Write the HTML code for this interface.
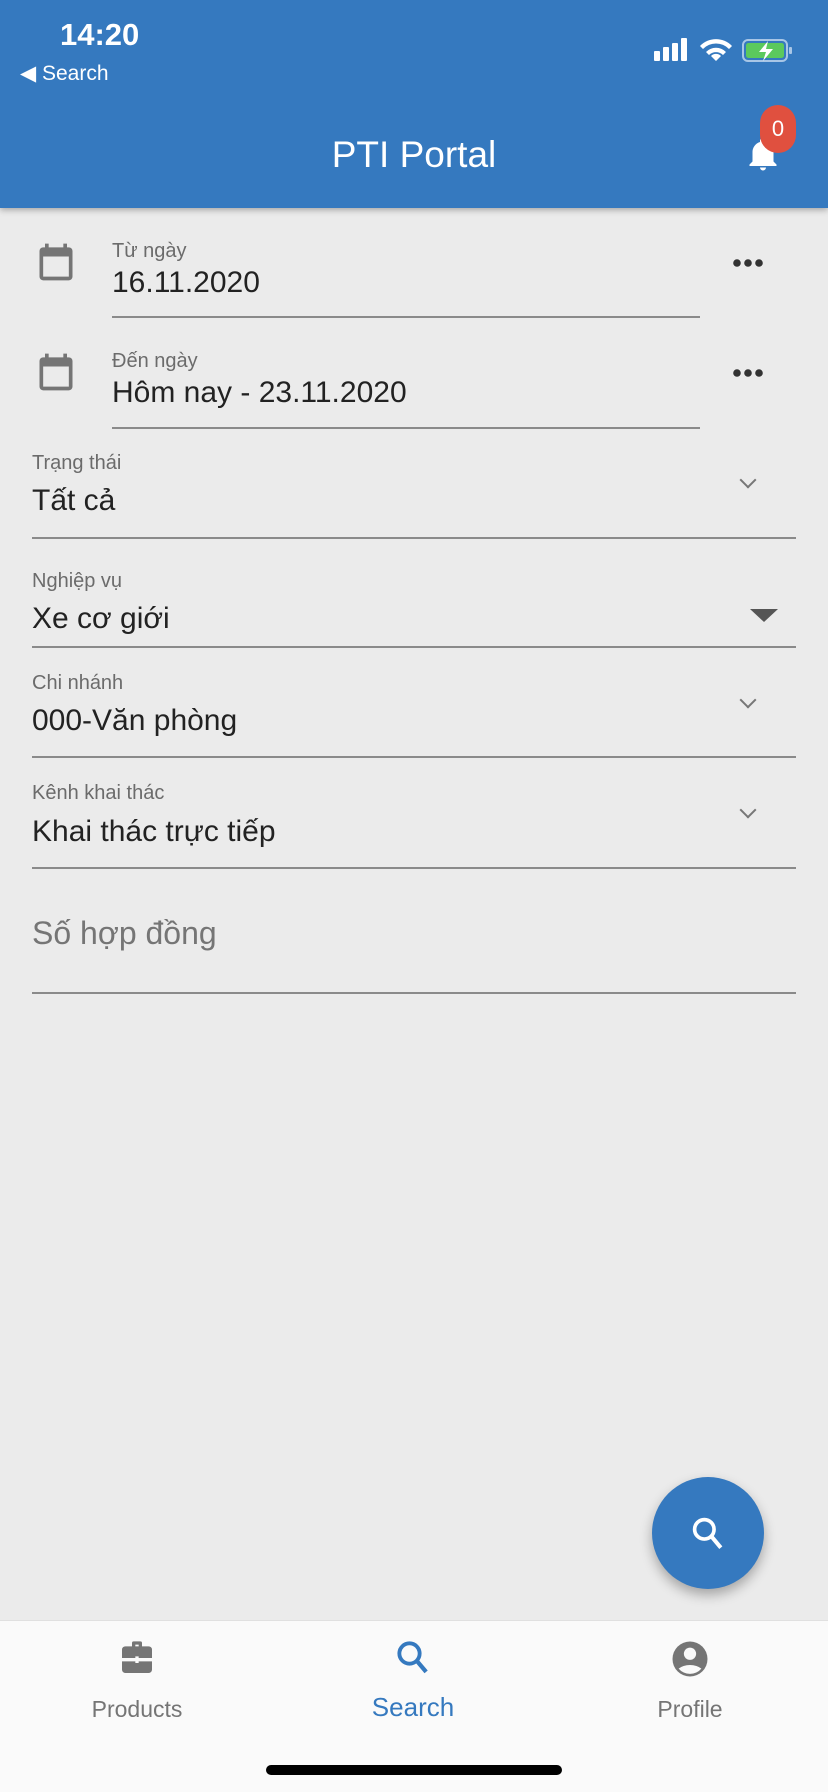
<!DOCTYPE html>
<html><head><meta charset="utf-8"><style>
*{margin:0;padding:0;box-sizing:border-box}
body{width:828px;height:1792px;background:#ebebeb;font-family:"Liberation Sans",sans-serif;position:relative;overflow:hidden;color:#222}
.a{position:absolute}
.hdr{left:0;top:0;width:828px;height:208px;background:#3579bf;box-shadow:0 2px 6px rgba(0,0,0,.3)}
.lbl{font-size:20px;color:#6b6b6b}
.val{font-size:30px;color:#222}
.line{height:1.5px;background:#8a8a8a}
.chev{width:12px;height:12px;border-right:2px solid #777;border-bottom:2px solid #777;transform:rotate(45deg)}
.nav{left:0;top:1620px;width:828px;height:172px;background:#fafafa;border-top:1px solid #e0e0e0}
.nl{font-size:23px;color:#757575;transform:translateX(-50%)}
</style></head><body>
<div class="a hdr"></div>
<div class="a" style="left:60px;top:17px;font-size:31px;color:#fff;font-weight:bold">14:20</div>
<div class="a" style="left:20px;top:61px;font-size:21px;color:#fff">◀ Search</div>
<svg class="a" style="left:652px;top:36px" width="150" height="28" viewBox="0 0 150 28">
<g fill="#fff"><rect x="2" y="15" width="6" height="10" rx="1"/><rect x="11" y="11" width="6" height="14" rx="1"/><rect x="20" y="7" width="6" height="18" rx="1"/><rect x="29" y="2" width="6" height="23" rx="1"/>
<path d="M64 25l-5-5a7 7 0 0 1 10 0z M54 16a14 14 0 0 1 20 0l-3 3a10 10 0 0 0-14 0z M48 10a22 22 0 0 1 32 0l-3 3a18 18 0 0 0-26 0z"/></g>
<rect x="91" y="4" width="44" height="21" rx="5" fill="none" stroke="#a8c6e6" stroke-width="2"/><rect x="94" y="7" width="38" height="15" rx="2.5" fill="#5bc95d"/><rect x="137" y="11" width="3" height="7" rx="1" fill="#a8c6e6"/>
<path d="M116 5l-9 11h7l-3 9 10-12h-7z" fill="#fff"/></svg>
<div class="a" style="left:0;width:828px;top:134px;text-align:center;font-size:37px;color:#fff">PTI Portal</div>
<svg class="a" style="left:745px;top:134px" width="36" height="40" viewBox="0 0 24 26"><path d="M12 2a2 2 0 0 1 2 2v1a7 7 0 0 1 5 7v6l2 2v1H3v-1l2-2v-6a7 7 0 0 1 5-7V4a2 2 0 0 1 2-2z M10 22h4a2 2 0 0 1-4 0z" fill="#fff"/></svg>
<div class="a" style="left:760px;top:105px;width:36px;height:48px;border-radius:18px;background:#e0503f;color:#fff;font-size:22px;text-align:center;line-height:48px">0</div>

<svg class="a" style="left:34px;top:240px" width="44" height="44" viewBox="0 0 24 24"><path fill="#757575" d="M19 4h-1V2h-2v2H8V2H6v2H5a2 2 0 0 0-2 2v14a2 2 0 0 0 2 2h14a2 2 0 0 0 2-2V6a2 2 0 0 0-2-2zm0 16H5V9h14z"/></svg>
<div class="a lbl" style="left:112px;top:240px">Từ ngày</div>
<div class="a val" style="left:112px;top:266px">16.11.2020</div>
<div class="a line" style="left:112px;top:316px;width:588px"></div>
<svg class="a" style="left:730px;top:256px" width="36" height="14"><circle cx="7" cy="7" r="3.8" fill="#333"/><circle cx="18" cy="7" r="3.8" fill="#333"/><circle cx="29" cy="7" r="3.8" fill="#333"/></svg>

<svg class="a" style="left:34px;top:350px" width="44" height="44" viewBox="0 0 24 24"><path fill="#757575" d="M19 4h-1V2h-2v2H8V2H6v2H5a2 2 0 0 0-2 2v14a2 2 0 0 0 2 2h14a2 2 0 0 0 2-2V6a2 2 0 0 0-2-2zm0 16H5V9h14z"/></svg>
<div class="a lbl" style="left:112px;top:350px">Đến ngày</div>
<div class="a val" style="left:112px;top:376px">Hôm nay - 23.11.2020</div>
<div class="a line" style="left:112px;top:427px;width:588px"></div>
<svg class="a" style="left:730px;top:366px" width="36" height="14"><circle cx="7" cy="7" r="3.8" fill="#333"/><circle cx="18" cy="7" r="3.8" fill="#333"/><circle cx="29" cy="7" r="3.8" fill="#333"/></svg>

<div class="a lbl" style="left:32px;top:452px">Trạng thái</div>
<div class="a val" style="left:32px;top:484px">Tất cả</div>
<div class="a chev" style="left:742px;top:474px"></div>
<div class="a line" style="left:32px;top:537px;width:764px"></div>

<div class="a lbl" style="left:32px;top:570px">Nghiệp vụ</div>
<div class="a val" style="left:32px;top:602px">Xe cơ giới</div>
<div class="a" style="left:750px;top:609px;border-left:14px solid transparent;border-right:14px solid transparent;border-top:13px solid #555"></div>
<div class="a line" style="left:32px;top:646px;width:764px"></div>

<div class="a lbl" style="left:32px;top:672px">Chi nhánh</div>
<div class="a val" style="left:32px;top:704px">000-Văn phòng</div>
<div class="a chev" style="left:742px;top:694px"></div>
<div class="a line" style="left:32px;top:756px;width:764px"></div>

<div class="a lbl" style="left:32px;top:782px">Kênh khai thác</div>
<div class="a val" style="left:32px;top:815px">Khai thác trực tiếp</div>
<div class="a chev" style="left:742px;top:804px"></div>
<div class="a line" style="left:32px;top:867px;width:764px"></div>

<div class="a" style="left:32px;top:915px;font-size:32px;color:#757575">Số hợp đồng</div>
<div class="a line" style="left:32px;top:992px;width:764px"></div>

<div class="a" style="left:652px;top:1477px;width:112px;height:112px;border-radius:50%;background:#3579bf;box-shadow:0 6px 12px rgba(0,0,0,.3)"></div>
<svg class="a" style="left:686px;top:1511px" width="44" height="44" viewBox="0 0 24 24"><circle cx="10" cy="10" r="5.3" fill="none" stroke="#fff" stroke-width="2"/><path d="M14 14l5 6" stroke="#fff" stroke-width="2.2"/></svg>

<div class="a nav"></div>
<svg class="a" style="left:117px;top:1638px" width="40" height="40" viewBox="0 0 24 24"><path fill="#757575" d="M10 2h4a1 1 0 0 1 1 1v2h4a2 2 0 0 1 2 2v5h-8v-1h-2v1H3V7a2 2 0 0 1 2-2h4V3a1 1 0 0 1 1-1zm1 2v1h2V4zM3 14h8v1h2v-1h8v5a2 2 0 0 1-2 2H5a2 2 0 0 1-2-2z"/></svg>
<div class="a nl" style="left:137px;top:1696px">Products</div>
<svg class="a" style="left:392px;top:1636px" width="42" height="42" viewBox="0 0 24 24"><circle cx="10" cy="10" r="5.8" fill="none" stroke="#3579bf" stroke-width="2.2"/><path d="M14 14l5.5 6.5" stroke="#3579bf" stroke-width="2.4"/></svg>
<div class="a nl" style="left:413px;top:1692px;color:#3579bf;font-size:26px">Search</div>
<svg class="a" style="left:669px;top:1638px" width="42" height="42" viewBox="0 0 24 24"><circle cx="12" cy="12" r="10" fill="#757575"/><circle cx="12" cy="9" r="3.5" fill="#fafafa"/><path d="M5.5 17.5a8 5 0 0 1 13 0a8.5 8.5 0 0 1-13 0z" fill="#fafafa"/></svg>
<div class="a nl" style="left:690px;top:1696px">Profile</div>
<div class="a" style="left:266px;top:1765px;width:296px;height:10px;border-radius:5px;background:#000"></div>
</body></html>
